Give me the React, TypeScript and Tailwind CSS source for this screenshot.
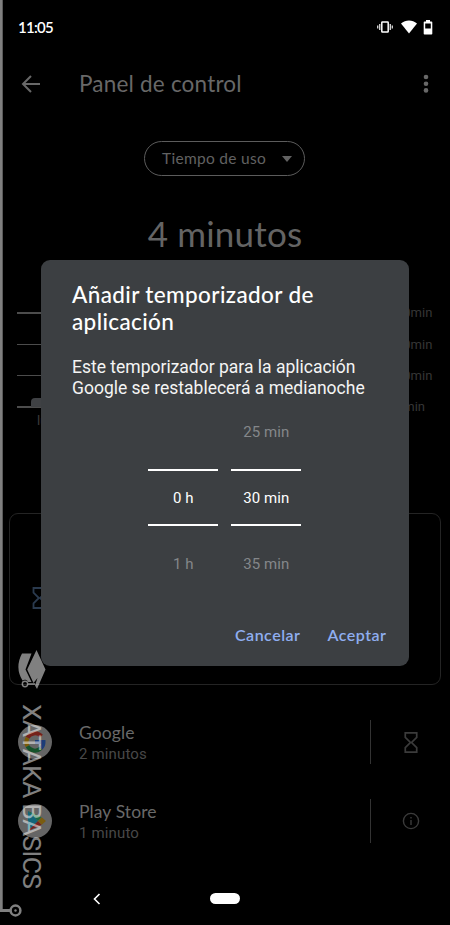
import React from 'react';

interface AppUsage {
  name: string;
  time: string;
  icon: React.ReactNode;
  action: React.ReactNode;
}

const Hourglass: React.FC<{ className?: string }> = ({ className }) => (
  <svg viewBox="0 0 14 22" className={className} fill="none" stroke="currentColor" strokeWidth="1.8">
    <path d="M1 1h12v4.6L7.6 11l5.4 5.4V21H1v-4.6L6.4 11 1 5.6z" />
  </svg>
);

const InfoIcon: React.FC = () => (
  <svg viewBox="0 0 18 18" className="h-[18px] w-[18px]" fill="none" stroke="currentColor" strokeWidth="1.4">
    <circle cx="9" cy="9" r="7.6" />
    <path d="M9 8v5M9 5v1.6" />
  </svg>
);

const GoogleLogo: React.FC = () => (
  <svg viewBox="0 0 34 34" className="h-[34px] w-[34px]">
    <circle cx="17" cy="17" r="17" fill="#656565" />
    <g fill="none" strokeWidth="4">
      <path d="M23.4 11.2A8.6 8.6 0 0 0 9.5 12.8" stroke="#75211b" />
      <path d="M9.5 12.8a8.6 8.6 0 0 0 0 8.4" stroke="#7a5a08" />
      <path d="M9.5 21.2a8.6 8.6 0 0 0 13.4 2.1" stroke="#15522a" />
      <path d="M22.9 23.3a8.6 8.6 0 0 0 2.6-6.3H17" stroke="#1c3d78" />
    </g>
  </svg>
);

const PlayLogo: React.FC = () => (
  <svg viewBox="0 0 34 34" className="h-[34px] w-[34px]">
    <circle cx="17" cy="17" r="17" fill="#656565" />
    <path d="M10 7v20l10-10z" fill="#12657a" />
    <path d="M10 7l10 10 3.7-3.7z" fill="#1b6b45" />
    <path d="M10 27l10-10 3.7 3.7z" fill="#75211f" />
    <path d="M23.7 13.3L28 17l-4.3 3.7L20 17z" fill="#7a5c10" />
  </svg>
);

const StatusBar: React.FC = () => (
  <div className="flex h-[54px] items-center justify-between pl-[18px] pr-[17px] text-white">
    <span className="font-[Lato] text-[15px] font-semibold tracking-[-0.7px]">11:05</span>
    <div className="flex items-center gap-2">
      <svg viewBox="0 0 16 12" className="h-3 w-4" fill="none" stroke="currentColor">
        <rect x="4.8" y="1" width="6.4" height="10" rx="0.6" strokeWidth="1.5" />
        <path d="M.7 4.5v3M2.7 3v6M13.3 3v6M15.3 4.5v3" strokeWidth="1.4" opacity="0.8" />
      </svg>
      <svg viewBox="0 0 16 14" className="h-3.5 w-4" fill="currentColor">
        <path d="M0 3.4C4.7-.6 11.3-.6 16 3.4L8 13.5z" />
      </svg>
      <svg viewBox="0 0 10 15" className="-ml-0.5 h-[15px] w-2.5" fill="currentColor">
        <path fillRule="evenodd" d="M3 0h4v1.5h1.5q.8 0 .8.8v11.4q0 .8-.8.8h-7q-.8 0-.8-.8V2.3q0-.8.8-.8H3zM2.2 3.5v5h5.6v-5z" />
      </svg>
    </div>
  </div>
);

const Chart: React.FC = () => {
  const labels = ['30min', '20min', '10min', '0min'];

  return (
    <div className="mt-[34.5px] h-[215px] pl-[17px]">
      {labels.map((label, i) => (
        <div key={label} className="relative flex h-[31.3px] items-center">
          <div className="h-[1.5px] w-[374px] bg-[#4c4c4c]" />
          {i === 3 && <div className="absolute bottom-[16px] left-[14px] h-[9px] w-6 rounded-tl-sm bg-[#3f4144]" />}
          <span className="ml-[5px] font-[Roboto] text-[13px] text-[#363636]">{label}</span>
        </div>
      ))}
      <span className="-mt-2.5 ml-5 block font-[Roboto] text-[13px] leading-4 text-[#3c3c3c]">lun</span>
    </div>
  );
};

const apps: AppUsage[] = [
  { name: 'Google', time: '2 minutos', icon: <GoogleLogo />, action: <Hourglass className="h-[21px] w-[14px]" /> },
  { name: 'Play Store', time: '1 minuto', icon: <PlayLogo />, action: <InfoIcon /> },
];

const AppRow: React.FC<AppUsage> = ({ name, time, icon, action }) => (
  <div className="flex h-[79px] items-center pl-[18px]">
    {icon}
    <div className="ml-[27px] w-[291px] pt-px">
      <p className="font-[Lato] text-[17.5px] leading-[22px] tracking-[0.1px] text-[#696969]">{name}</p>
      <p className="font-[Roboto] text-[15px] leading-5 tracking-[0.15px] text-[#484848]">{time}</p>
    </div>
    <div className="h-11 w-px bg-[#333]" />
    <div className="flex w-[79px] justify-center text-[#3b3b3b]">{action}</div>
  </div>
);

const PickerColumn: React.FC<{ values: string[] }> = ({ values }) => (
  <div className="w-[70px] text-center font-[Roboto] text-[15px] tracking-[0.1px]">
    <div className="flex h-[49px] items-start justify-center leading-6 text-[#84878a]">{values[0]}</div>
    <div className="flex h-[57px] items-center justify-center border-y-2 border-white pt-0.5 text-white">{values[1]}</div>
    <div className="flex h-[50px] items-end justify-center leading-6 text-[#84878a]">{values[2]}</div>
  </div>
);

const TimerDialog: React.FC = () => (
  <div
    role="dialog"
    className="absolute left-[41px] top-[260px] flex h-[405.5px] w-[367.5px] flex-col rounded-[9px] bg-[#3c3f42] pl-[31px] pt-[21px]"
  >
    <h2 className="w-[270px] font-[Lato] text-[22.5px] font-medium leading-[27px] tracking-[0.38px] text-white">
      Añadir temporizador de aplicación
    </h2>
    <p className="mt-[22px] w-[310px] font-[Roboto] text-[17.5px] leading-[20.5px] text-[#f4f4f4]">
      Este temporizador para la aplicación Google se restablecerá a medianoche
    </p>
    <div className="ml-[76.3px] mt-[22px] flex gap-[13px]">
      <PickerColumn values={['', '0 h', '1 h']} />
      <PickerColumn values={['25 min', '30 min', '35 min']} />
    </div>
    <div className="mr-[22px] mt-[47px] flex justify-end gap-[27px] font-[Lato] text-[16px] font-semibold leading-6 tracking-[0.5px] text-[#8faef0]">
      <button>Cancelar</button>
      <button>Aceptar</button>
    </div>
  </div>
);

const Watermark: React.FC = () => (
  <div className="pointer-events-none absolute inset-y-0 left-0 w-[60px] opacity-50">
    <svg viewBox="0 0 60 925" className="absolute inset-0 h-[925px] w-[60px]" fill="none" stroke="white">
      <path d="M1.3 0V910.5H10.5" strokeWidth="2.8" />
      <circle cx="15.5" cy="910.5" r="4.9" strokeWidth="2.5" />
      <circle cx="15.5" cy="910.5" r="1.2" fill="white" stroke="none" />
      <path d="M22 653.5h9.5L25.5 669.500 31.500 682h-3.500a3.500 3.500 0 0 0-5.500-1.500q-8-13-.500-27z" fill="white" stroke="none" />
      <path d="M36.500 650L45.500 669.500 37 689 35 685.500 37.500 678 33.500 683 27.200 669.500z" fill="white" stroke="none" />
      <circle cx="25" cy="684" r="2.700" strokeWidth="1.400" />
      <path d="M28 684h7" strokeWidth="1.600" />
    </svg>
    <span className="absolute left-[16px] top-[704px] whitespace-nowrap font-[Roboto] text-[26.5px] leading-[32px] tracking-[-0.8px] text-white [writing-mode:vertical-rl]">
      XATAKA BASICS
    </span>
  </div>
);

const App: React.FC = () => (
  <div className="relative h-[925px] w-[450px] overflow-hidden bg-black">
    <StatusBar />
    <header className="flex h-[60px] items-center pl-[21px] pr-[21px] text-[#686868]">
      <svg viewBox="0 0 20 18" className="h-[18px] w-5" fill="none" stroke="currentColor" strokeWidth="2">
        <path d="M19 9H2M10 1L2 9l8 8" />
      </svg>
      <h1 className="ml-[38px] flex-1 font-[Lato] text-[22.5px] tracking-[0.2px]">Panel de control</h1>
      <svg viewBox="0 0 6 20" className="h-5 w-1.5" fill="currentColor">
        <circle cx="3" cy="3" r="2.3" />
        <circle cx="3" cy="9.7" r="2.3" />
        <circle cx="3" cy="16.4" r="2.3" />
      </svg>
    </header>
    <div className="ml-[144px] mt-[27px] flex h-[35px] w-[161px] items-center justify-between rounded-full border border-[#5c5c5c] pl-[17px] pr-3 text-[#626262]">
      <span className="font-[Lato] text-[15.5px] tracking-[0.3px]">Tiempo de uso</span>
      <svg viewBox="0 0 10 6" className="h-1.5 w-2.5" fill="currentColor">
        <path d="M0 0h10L5 6z" />
      </svg>
    </div>
    <p className="mt-[27px] h-[60px] text-center font-[Lato] text-[35px] leading-[60px] tracking-[0.2px] text-[#646464]">4 minutos</p>
    <Chart />
    <section className="ml-[9px] h-[172.5px] w-[432px] rounded-[9px] border border-[#242424] pl-[22px] pt-[73px]">
      <Hourglass className="h-[22px] w-[15px] text-[#2a3a4e]" />
      <p className="ml-[47px] mt-[39px] font-[Roboto] text-[14px] leading-5 text-[#444]">digital</p>
    </section>
    <div className="mt-[17.5px]">
      {apps.map((app) => (
        <AppRow key={app.name} {...app} />
      ))}
    </div>
    <nav className="mt-[20px] flex h-9 items-center pl-[93px] text-white">
      <svg viewBox="0 0 8 12" className="h-3 w-2" fill="none" stroke="currentColor" strokeWidth="1.6">
        <path d="M6.5 1L1.5 6l5 5" />
      </svg>
      <div className="ml-[109px] h-[11px] w-[30px] rounded-full bg-white" />
    </nav>
    <TimerDialog />
    <Watermark />
  </div>
);

export default App;
